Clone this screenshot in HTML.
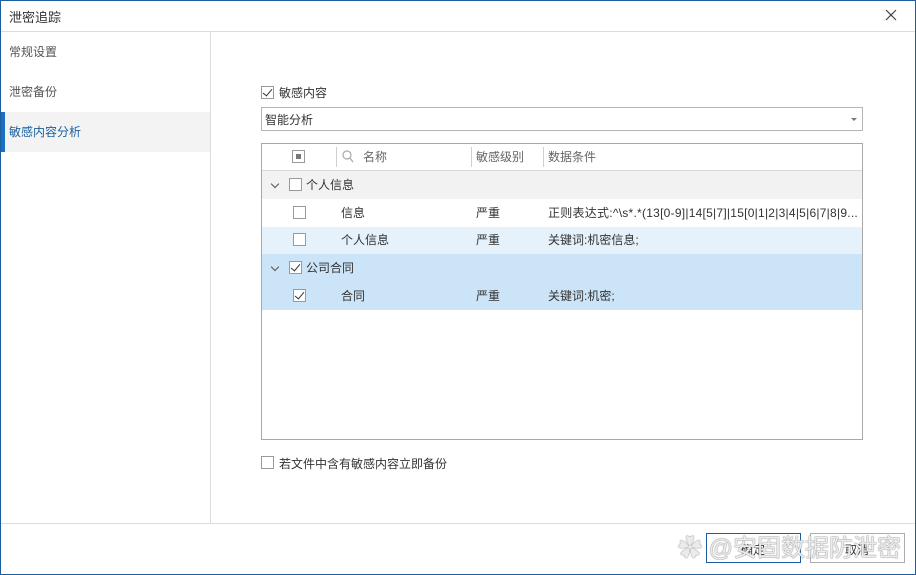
<!DOCTYPE html><html><head><meta charset="utf-8"><style>
*{box-sizing:border-box;margin:0;padding:0}
body{width:916px;height:575px;overflow:hidden;background:#fff;font-family:"Liberation Sans","Microsoft YaHei","Noto Sans CJK SC",sans-serif;font-size:12px;color:#333;position:relative}
.win{position:absolute;left:0;top:0;width:916px;height:575px;border:1px solid #1c5d9f;border-top:1px solid #1c5d9f}
.a{position:absolute}
.cb{position:absolute;width:13px;height:13px;border:1px solid #9a9a9a;background:#fff}
.ck::after{content:"";position:absolute;left:3px;top:0px;width:4px;height:8px;border:solid #333;border-width:0 1.5px 1.5px 0;transform:rotate(40deg)}
.row{position:absolute;left:262px;width:600px;height:27px}
.t{position:absolute;line-height:14px}
.chev{position:absolute;width:6px;height:6px;border:solid #555;border-width:0 1.3px 1.3px 0;transform:rotate(45deg)}
</style></head><body>
<div class="win"></div>
<div class="a" style="left:9px;top:7px;font-size:13px;color:#333">泄密追踪</div>
<svg class="a" style="left:885px;top:9px" width="12" height="12"><path d="M1 1L11 11M11 1L1 11" stroke="#444" stroke-width="1.2"/></svg>
<div class="a" style="left:1px;top:31px;width:914px;height:1px;background:#dcdcdc"></div>
<div class="a" style="left:210px;top:32px;width:1px;height:491px;background:#dcdcdc"></div>
<div class="a" style="left:9px;top:43px;font-size:12px;color:#555">常规设置</div>
<div class="a" style="left:9px;top:83px;color:#555">泄密备份</div>
<div class="a" style="left:1px;top:112px;width:209px;height:40px;background:#f3f3f3"></div>
<div class="a" style="left:1px;top:112px;width:4px;height:40px;background:#1a6fc0"></div>
<div class="a" style="left:9px;top:123px;color:#1a5f9e">敏感内容分析</div>

<div class="cb ck" style="left:261px;top:86px"></div>
<div class="a" style="left:279px;top:84px">敏感内容</div>
<div class="a" style="left:261px;top:107px;width:602px;height:24px;border:1px solid #b5b5b5"></div>
<div class="a" style="left:265px;top:111px">智能分析</div>
<div class="a" style="left:851px;top:118px;border:3px solid transparent;border-top:3px solid #777"></div>

<div class="a" style="left:261px;top:143px;width:602px;height:297px;border:1px solid #a8a8a8"></div>
<div class="a" style="left:262px;top:170px;width:600px;height:1px;background:#d8d8d8"></div>
<div class="cb" style="left:292px;top:150px"></div><div class="a" style="left:296px;top:154px;width:5px;height:5px;background:#777"></div>
<div class="a" style="left:336px;top:147px;width:1px;height:20px;background:#d0d0d0"></div>
<svg class="a" style="left:342px;top:150px" width="12" height="13"><circle cx="5" cy="5" r="4" fill="none" stroke="#aaa" stroke-width="1.2"/><path d="M8 8L11 12" stroke="#aaa" stroke-width="1.3"/></svg>
<div class="t" style="left:363px;top:150px;color:#666">名称</div>
<div class="a" style="left:471px;top:147px;width:1px;height:20px;background:#d0d0d0"></div>
<div class="t" style="left:476px;top:150px;color:#666">敏感级别</div>
<div class="a" style="left:543px;top:147px;width:1px;height:20px;background:#d0d0d0"></div>
<div class="t" style="left:548px;top:150px;color:#666">数据条件</div>

<div class="row" style="top:171px;height:28px;background:#f2f2f2"></div>
<div class="chev" style="left:272px;top:181px"></div>
<div class="cb" style="left:289px;top:178px"></div>
<div class="t" style="left:306px;top:178px">个人信息</div>

<div class="cb" style="left:293px;top:206px"></div>
<div class="t" style="left:341px;top:206px">信息</div>
<div class="t" style="left:476px;top:206px">严重</div>
<div class="t" style="left:548px;top:206px;white-space:nowrap;font-size:12px;letter-spacing:0.25px">正则表达式:^\s*.*(13[0-9]|14[5|7]|15[0|1|2|3|4|5|6|7|8|9...</div>

<div class="row" style="top:227px;background:#e5f1fb"></div>
<div class="cb" style="left:293px;top:233px"></div>
<div class="t" style="left:341px;top:233px">个人信息</div>
<div class="t" style="left:476px;top:233px">严重</div>
<div class="t" style="left:548px;top:233px">关键词:机密信息;</div>

<div class="row" style="top:254px;height:56px;background:#cce4f7"></div>
<div class="chev" style="left:272px;top:264px"></div>
<div class="cb ck" style="left:289px;top:261px"></div>
<div class="t" style="left:306px;top:261px">公司合同</div>
<div class="cb ck" style="left:293px;top:289px"></div>
<div class="t" style="left:341px;top:289px">合同</div>
<div class="t" style="left:476px;top:289px">严重</div>
<div class="t" style="left:548px;top:289px">关键词:机密;</div>

<div class="cb" style="left:261px;top:456px"></div>
<div class="a" style="left:279px;top:455px">若文件中含有敏感内容立即备份</div>

<div class="a" style="left:1px;top:523px;width:914px;height:1px;background:#dcdcdc"></div>
<div class="a" style="left:706px;top:533px;width:95px;height:30px;border:1px solid #1c5d9f"></div>
<div class="a" style="left:741px;top:541px">确定</div>
<div class="a" style="left:810px;top:533px;width:95px;height:30px;border:1px solid #acacac"></div>
<div class="a" style="left:845px;top:541px">取消</div>
<div class="a" style="left:678px;top:528px;font-size:24px;color:rgba(255,255,255,.85);text-shadow:0 0 1px #777,0 0 1px #777;white-space:nowrap">✿ @安固数据防泄密</div>
</body></html>
